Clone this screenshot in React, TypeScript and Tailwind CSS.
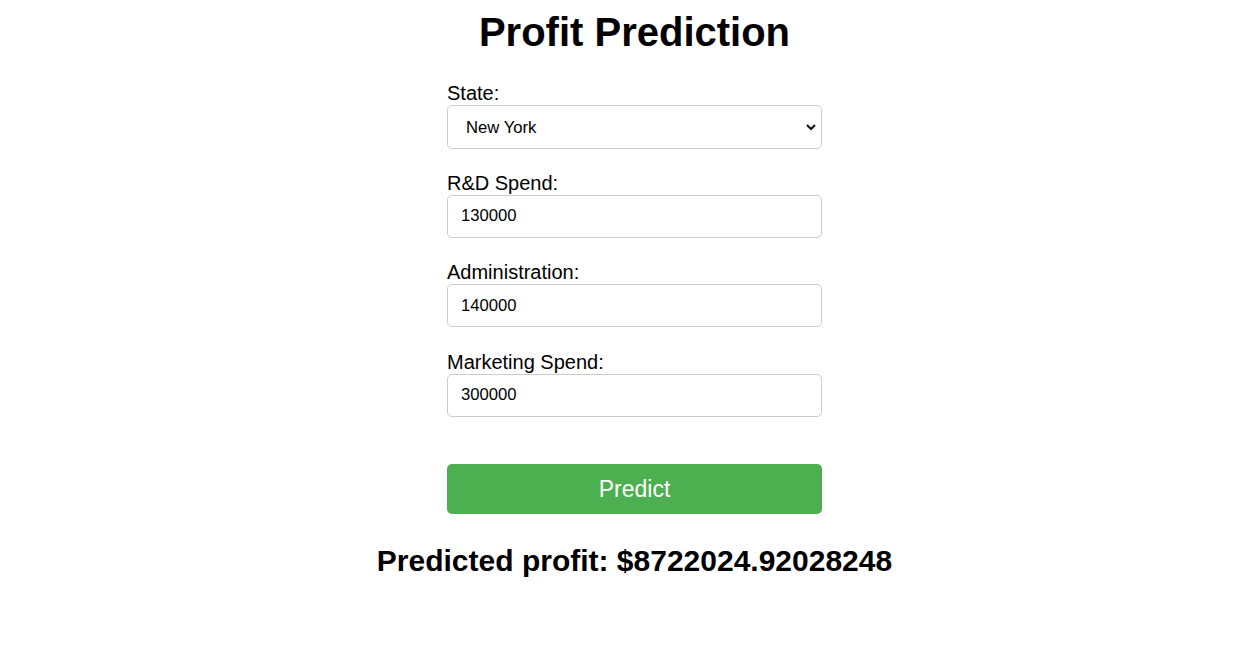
import React, { useState } from 'react';

const fields = [
  { id: 'rd', label: 'R&D Spend:', value: '130000' },
  { id: 'admin', label: 'Administration:', value: '140000' },
  { id: 'marketing', label: 'Marketing Spend:', value: '300000' },
];

const App: React.FC = () => {
  const [state, setState] = useState('New York');

  return (
    <div className="min-h-screen bg-white pl-[34px] text-black font-['Liberation_Sans',Arial,sans-serif]">
      <h1 className="pt-[9px] text-center text-[40px] font-bold leading-[46px]">Profit Prediction</h1>

      <form className="mx-auto mt-[27px] w-[375px]" onSubmit={(e) => e.preventDefault()}>
        <div className="mb-[20.5px]">
          <label className="block text-[20px] leading-[23px]">State:</label>
          <div className="relative">
            <select
              value={state}
              onChange={(e) => setState(e.target.value)}
              className="block h-[44px] w-full appearance-none rounded-[5px] border border-[#cccccc] bg-white pl-[18px] text-[16.67px] text-black outline-none"
            >
              <option>New York</option>
              <option>California</option>
              <option>Florida</option>
            </select>
            <svg
              className="pointer-events-none absolute right-[5px] top-1/2 -translate-y-1/2"
              width="12"
              height="12"
              viewBox="0 0 12 12"
            >
              <path d="M2 4 L6 8 L10 4" fill="none" stroke="#111" strokeWidth="2" />
            </svg>
          </div>
        </div>

        {fields.map((f) => (
          <div key={f.id} className="mb-[21.5px] last:mb-0">
            <label className="block pt-[2px] text-[20px] leading-[23px]">{f.label}</label>
            <input
              type="text"
              defaultValue={f.value}
              className="block h-[43px] w-full rounded-[5px] border border-[#cccccc] bg-white px-[13px] text-[16.67px] text-black outline-none"
            />
          </div>
        ))}

        <button
          type="submit"
          className="mt-[47.5px] block h-[50px] w-full rounded-[5px] bg-[#4caf50] text-[23px] text-white"
        >
          Predict
        </button>
      </form>

      <h2 className="mt-[29px] text-center text-[30px] font-bold leading-[35px]">
        Predicted profit: $8722024.92028248
      </h2>
    </div>
  );
};

export default App;
